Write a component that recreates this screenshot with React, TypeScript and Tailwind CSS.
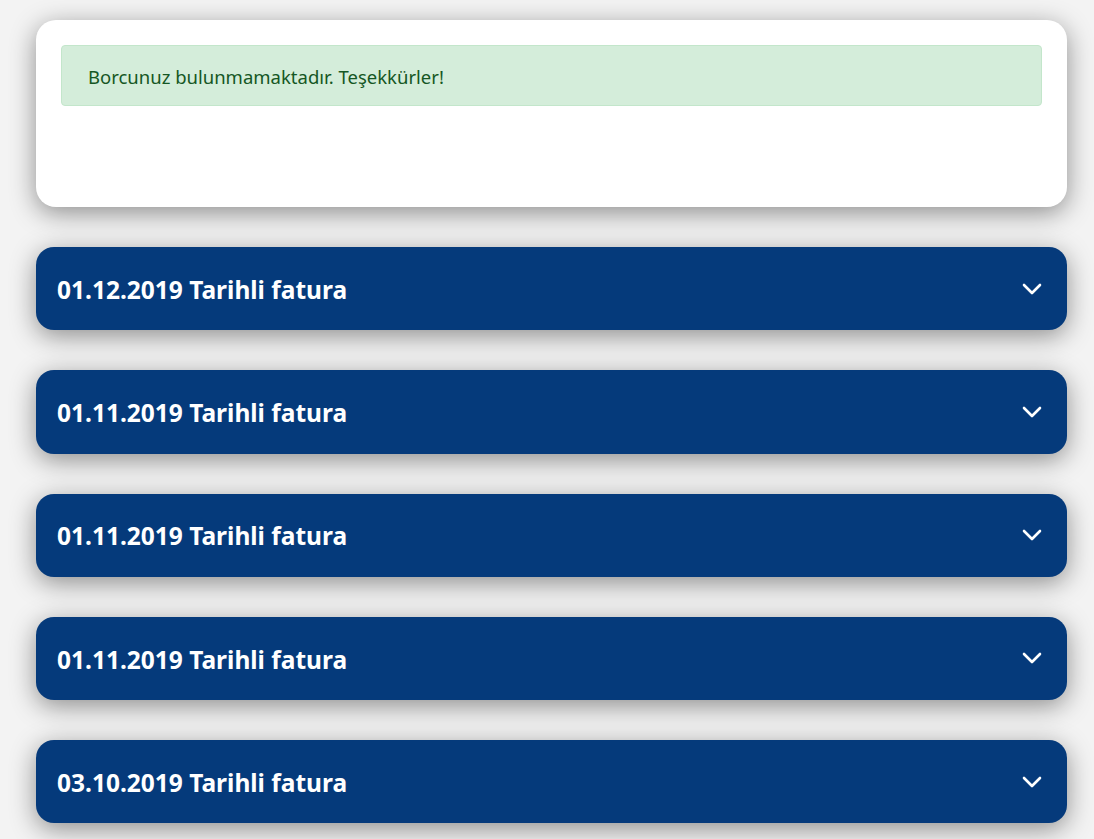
import React, { useState } from 'react';

const invoices = ['01.12.2019', '01.11.2019', '01.11.2019', '01.11.2019', '03.10.2019'];

const Chevron = () => (
  <svg className="w-[20px] h-[12px]" fill="none" stroke="currentColor" viewBox="0 0 20 12">
    <path strokeLinecap="round" strokeLinejoin="round" strokeWidth={2.6} d="M2 2l8 8 8-8" />
  </svg>
);

const App: React.FC = () => {
  const [open, setOpen] = useState<number | null>(null);

  return (
    <div className="min-h-screen bg-[#f3f3f3] pl-[36px] pr-[27px] pt-[20px] pb-[40px] font-['Noto_Sans',sans-serif]">
      <div className="bg-white rounded-[20px] shadow-[0_6px_26px_rgba(0,0,0,0.42)] p-[25px] h-[187px]">
        <div className="bg-[#d4edda] border border-[#c3e6cb] rounded-[4px] text-[#155724] text-[18.5px] px-[26px] pt-[2px] h-[61px] flex items-center">
          Borcunuz bulunmamaktadır. Teşekkürler!
        </div>
      </div>

      <div className="mt-[40px] flex flex-col gap-[40px]">
        {invoices.map((d, i) => (
          <div key={i}>
            <button
              onClick={() => setOpen(open === i ? null : i)}
              className="w-full h-[83.25px] bg-[#053a7b] rounded-[18px] shadow-[0_6px_26px_rgba(0,0,0,0.42)] pl-[21px] pr-[25px] flex items-center justify-between text-white"
            >
              <span className="text-[24.5px] font-bold pt-[3px]">{d} Tarihli fatura</span>
              <Chevron />
            </button>
          </div>
        ))}
      </div>
    </div>
  );
};

export default App;
